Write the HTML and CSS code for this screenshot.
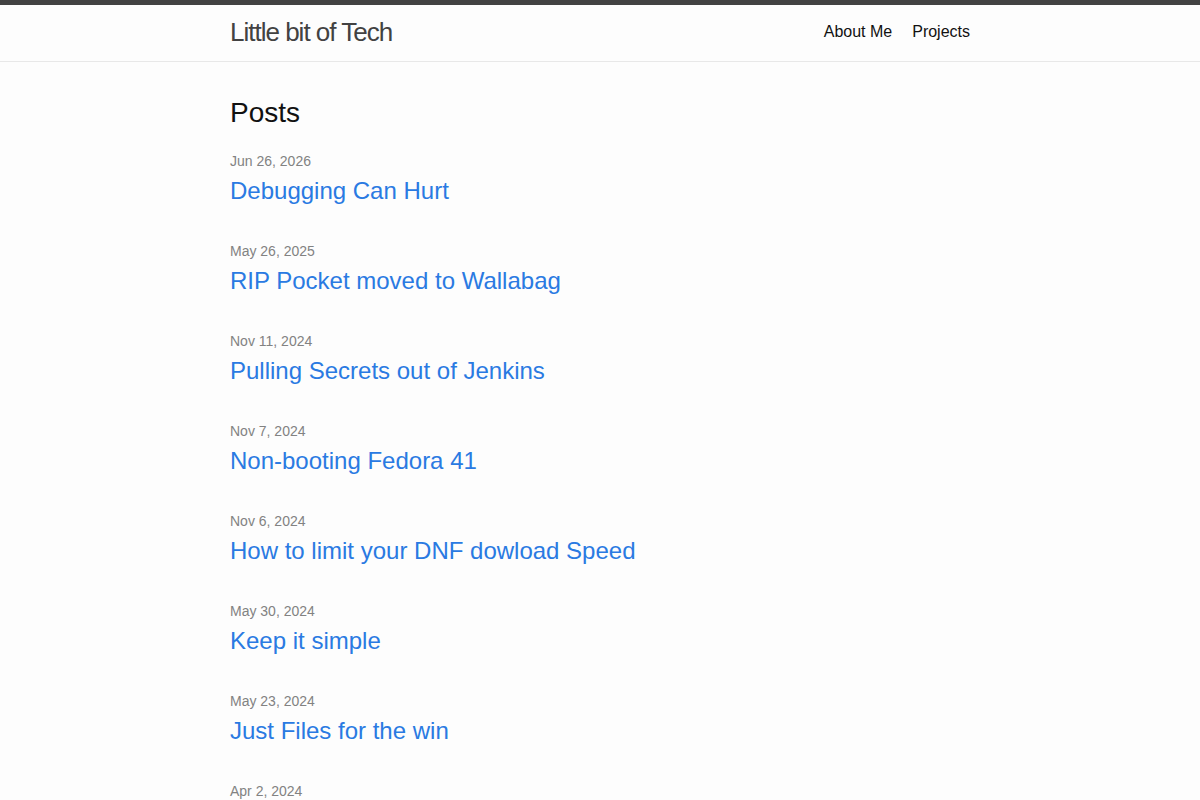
FILE: index.html
```html
<!DOCTYPE html>
<html lang="en">
<head>
    <meta charset="UTF-8">
    <meta name="viewport" content="width=device-width, initial-scale=1.0">
    <title>Little bit of Tech</title>
    <link rel="stylesheet" href="styles.css">
</head>
<body>
    <header class="site-header">
        <div class="wrapper header-row">
            <a class="site-title" href="#">Little bit of Tech</a>
            <nav class="site-nav">
                <a class="page-link" href="#">About Me</a>
                <a class="page-link" href="#">Projects</a>
            </nav>
        </div>
    </header>

    <main class="page-content">
        <div class="wrapper">
            <h2 class="post-list-heading">Posts</h2>
            <ul class="post-list">
                <li>
                    <span class="post-meta">Jun 26, 2026</span>
                    <h3><a class="post-link" href="#">Debugging Can Hurt</a></h3>
                </li>
                <li>
                    <span class="post-meta">May 26, 2025</span>
                    <h3><a class="post-link" href="#">RIP Pocket moved to Wallabag</a></h3>
                </li>
                <li>
                    <span class="post-meta">Nov 11, 2024</span>
                    <h3><a class="post-link" href="#">Pulling Secrets out of Jenkins</a></h3>
                </li>
                <li>
                    <span class="post-meta">Nov 7, 2024</span>
                    <h3><a class="post-link" href="#">Non-booting Fedora 41</a></h3>
                </li>
                <li>
                    <span class="post-meta">Nov 6, 2024</span>
                    <h3><a class="post-link" href="#">How to limit your DNF dowload Speed</a></h3>
                </li>
                <li>
                    <span class="post-meta">May 30, 2024</span>
                    <h3><a class="post-link" href="#">Keep it simple</a></h3>
                </li>
                <li>
                    <span class="post-meta">May 23, 2024</span>
                    <h3><a class="post-link" href="#">Just Files for the win</a></h3>
                </li>
                <li>
                    <span class="post-meta">Apr 2, 2024</span>
                </li>
            </ul>
        </div>
    </main>
</body>
</html>
```

FILE: styles.css
```css
body {
    margin: 0;
    font-family: "Liberation Sans", Arial, sans-serif;
    font-size: 16px;
    line-height: 1.5;
    color: #111;
    background-color: #fdfdfd;
}

a {
    text-decoration: none;
}

.wrapper {
    max-width: 740px;
    margin: 0 auto;
}

/* header */
.site-header {
    border-top: 5px solid #424242;
    border-bottom: 1px solid #e8e8e8;
    min-height: 56px;
}

.header-row {
    display: flex;
    justify-content: space-between;
    align-items: flex-start;
}

.site-title {
    font-size: 26px;
    font-weight: 300;
    line-height: 54px;
    letter-spacing: -1px;
    color: #424242;
}

.site-nav {
    display: flex;
    gap: 20px;
    line-height: 54px;
}

.page-link {
    color: #111;
}

/* posts */
.page-content {
    padding: 30px 0;
}

.post-list-heading {
    font-size: 28px;
    font-weight: 400;
    margin: 0 0 15px;
}

.post-list {
    list-style: none;
    margin: 0;
    padding: 0;
}

.post-list li {
    margin-bottom: 30px;
}

.post-meta {
    font-size: 14px;
    color: #828282;
}

.post-list h3 {
    margin: 0;
    font-size: 24px;
    font-weight: 400;
    line-height: 1.5;
}

.post-link {
    color: #2a7ae2;
}
```
